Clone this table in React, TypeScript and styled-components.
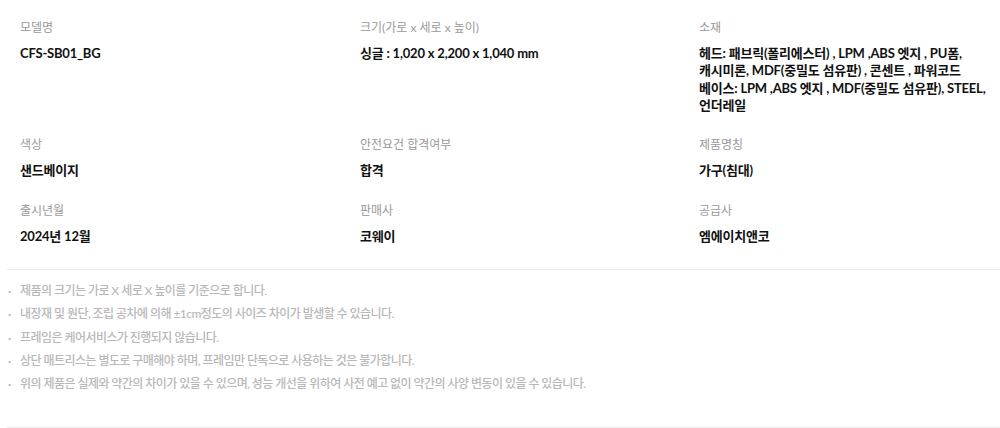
import React from "react";
import styled, { createGlobalStyle } from "styled-components";

const GlobalStyle = createGlobalStyle`
  html, body { margin: 0; padding: 0; background: #fff; }
  body { font-family: "Lato", "Noto Sans CJK KR", sans-serif; }
`;

const Page = styled.div`
  width: 1000px;
  padding-left: 7px;
  box-sizing: border-box;
`;

const InfoGrid = styled.div`
  display: grid;
  grid-template-columns: 340px 339px 1fr;
  row-gap: 22px;
  padding: 19px 0 24px 13px;
  border-bottom: 1px solid #eeeeee;
`;

const Item = styled.div`
  display: flex;
  flex-direction: column;
`;

const Label = styled.div`
  font-size: 12px;
  line-height: 18px;
  color: #999;
`;

const Value = styled.div`
  margin-top: 8px;
  font-size: 13px;
  line-height: 17.33px;
  font-weight: 700;
  color: #111;
  letter-spacing: -0.2px;
`;

const Notes = styled.ul`
  list-style: none;
  margin: 0;
  padding: 9px 0 32px 0;
  border-bottom: 1px solid #eeeeee;
`;

const Note = styled.li`
  position: relative;
  padding-left: 13px;
  font-size: 12px;
  line-height: 23.3px;
  font-weight: 500;
  color: #b8b8b8;
  letter-spacing: -0.55px;
  &::before {
    content: "·";
    position: absolute;
    left: 1px;
    top: 0;
    font-weight: 700;
  }
`;

const info: { label: string; value: string[] }[] = [
  { label: "모델명", value: ["CFS-SB01_BG"] },
  { label: "크기(가로 x 세로 x 높이)", value: ["싱글 : 1,020 x 2,200 x 1,040 mm"] },
  {
    label: "소재",
    value: [
      "헤드: 패브릭(폴리에스터) , LPM ,ABS 엣지 , PU폼,",
      "캐시미론, MDF(중밀도 섬유판) , 콘센트 , 파워코드",
      "베이스: LPM ,ABS 엣지 , MDF(중밀도 섬유판), STEEL,",
      "언더레일",
    ],
  },
  { label: "색상", value: ["샌드베이지"] },
  { label: "안전요건 합격여부", value: ["합격"] },
  { label: "제품명칭", value: ["가구(침대)"] },
  { label: "출시년월", value: ["2024년 12월"] },
  { label: "판매사", value: ["코웨이"] },
  { label: "공급사", value: ["엠에이치앤코"] },
];

const notes = [
  "제품의 크기는 가로 X 세로 X 높이를 기준으로 합니다.",
  "내장재 및 원단, 조립 공차에 의해 ±1cm정도의 사이즈 차이가 발생할 수 있습니다.",
  "프레임은 케어서비스가 진행되지 않습니다.",
  "상단 매트리스는 별도로 구매해야 하며, 프레임만 단독으로 사용하는 것은 불가합니다.",
  "위의 제품은 실제와 약간의 차이가 있을 수 있으며, 성능 개선을 위하여 사전 예고 없이 약간의 사양 변동이 있을 수 있습니다.",
];

export default function App() {
  return (
    <>
      <GlobalStyle />
      <Page>
        <InfoGrid>
          {info.map((it) => (
            <Item key={it.label}>
              <Label>{it.label}</Label>
              <Value>
                {it.value.map((v, i) => (
                  <div key={i}>{v}</div>
                ))}
              </Value>
            </Item>
          ))}
        </InfoGrid>
        <Notes>
          {notes.map((n) => (
            <Note key={n}>{n}</Note>
          ))}
        </Notes>
      </Page>
    </>
  );
}
